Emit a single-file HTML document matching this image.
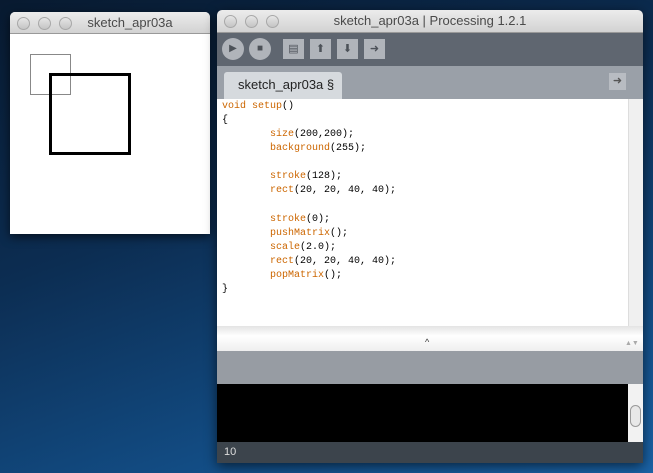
<!DOCTYPE html>
<html><head><style>
*{margin:0;padding:0;box-sizing:border-box}
body{width:653px;height:473px;overflow:hidden;position:relative;background:linear-gradient(160deg,#081a30 0%,#0c2d52 40%,#13508a 80%,#1a62a5 100%);font-family:"Liberation Sans",sans-serif}
.abs{position:absolute}
.title{background:linear-gradient(#ececec,#d2d2d2);border-bottom:1px solid #999;border-radius:5px 5px 0 0;color:#4a4a4a;font-size:13px;text-align:center;line-height:22px}
.dot{position:absolute;top:5px;width:13px;height:13px;border-radius:50%;background:linear-gradient(#e6e6e6,#c4c4c4);border:1px solid #a8a8a8}
.code{font-family:"Liberation Mono",monospace;font-size:10px;line-height:14.08px;color:#000;white-space:pre}
.k{color:#cc6600}
.tb{position:absolute;top:40px;width:21px;height:20px;background:#b0b4ba;color:#4c5158;font-size:11px;text-align:center;line-height:20px}
.rb{position:absolute;top:39px;width:22px;height:22px;border-radius:50%;background:#b0b4ba;color:#4c5158;font-size:10px;text-align:center;line-height:22px}
</style></head><body>
<div class="abs" style="left:10px;top:12px;width:200px;height:222px;background:#fff;box-shadow:0 3px 10px rgba(0,0,0,.6);border-radius:5px 5px 0 0">
<div class="title" style="height:22px;padding-left:40px">sketch_apr03a</div>
<div class="dot" style="left:7px"></div><div class="dot" style="left:28px"></div><div class="dot" style="left:49px"></div>
<div class="abs" style="left:20px;top:42px;width:41px;height:41px;border:1px solid #888"></div>
<div class="abs" style="left:39px;top:61px;width:82px;height:82px;border:3px solid #000"></div>
</div>
<div class="abs" style="left:217px;top:10px;width:426px;height:453px;background:#979ca3;box-shadow:0 3px 12px rgba(0,0,0,.6);border-radius:5px 5px 0 0;overflow:hidden">
<div class="title" style="height:23px">sketch_apr03a | Processing 1.2.1</div>
<div class="dot" style="left:7px"></div><div class="dot" style="left:28px"></div><div class="dot" style="left:49px"></div>
<div class="abs" style="left:0;top:23px;width:426px;height:33px;background:#5f6670"></div>
<div class="rb" style="left:5px;top:28px">▶</div>
<div class="rb" style="left:32px;top:28px">■</div>
<div class="tb" style="left:66px;top:29px">▤</div>
<div class="tb" style="left:93px;top:29px">⬆</div>
<div class="tb" style="left:120px;top:29px">⬇</div>
<div class="tb" style="left:147px;top:29px">➜</div>
<div class="abs" style="left:0;top:56px;width:426px;height:33px;background:#9aa0a8"></div>
<div class="abs" style="left:7px;top:62px;width:118px;height:27px;background:#d6dade;border-radius:3px 3px 0 0;font-size:13px;color:#222;line-height:25px;padding-left:14px">sketch_apr03a §</div>
<div class="abs" style="left:392px;top:63px;width:17px;height:17px;background:#b8bcc2;color:#555;font-size:11px;text-align:center;line-height:17px">➜</div>
<div class="abs" style="left:0;top:89px;width:411px;height:227px;background:#fff"></div>
<div class="abs" style="left:411px;top:89px;width:15px;height:227px;background:#f0f0f0;border-left:1px solid #ddd"></div>
<div class="abs code" style="left:5px;top:90px"><span class="k">void setup</span>()
{
        <span class="k">size</span>(200,200);
        <span class="k">background</span>(255);

        <span class="k">stroke</span>(128);
        <span class="k">rect</span>(20, 20, 40, 40);

        <span class="k">stroke</span>(0);
        <span class="k">pushMatrix</span>();
        <span class="k">scale</span>(2.0);
        <span class="k">rect</span>(20, 20, 40, 40);
        <span class="k">popMatrix</span>();
}</div>
<div class="abs" style="left:0;top:316px;width:426px;height:25px;background:linear-gradient(#e4e4e4,#fff 40%,#eee)"></div>
<div class="abs" style="left:208px;top:327px;font-size:9px;color:#333">^</div>
<div class="abs" style="left:408px;top:330px;font-size:7px;color:#aaa">▲▼</div>
<div class="abs" style="left:0;top:341px;width:426px;height:33px;background:#979ca3"></div>
<div class="abs" style="left:0;top:374px;width:411px;height:58px;background:#000"></div>
<div class="abs" style="left:411px;top:374px;width:15px;height:58px;background:#f2f2f2"></div>
<div class="abs" style="left:413px;top:395px;width:11px;height:22px;border:1px solid #999;border-radius:6px;background:#e8e8e8"></div>
<div class="abs" style="left:0;top:432px;width:426px;height:21px;background:#3c444c;color:#ddd;font-size:11px;line-height:21px;padding-left:7px">10</div>
</div>
</body></html>
